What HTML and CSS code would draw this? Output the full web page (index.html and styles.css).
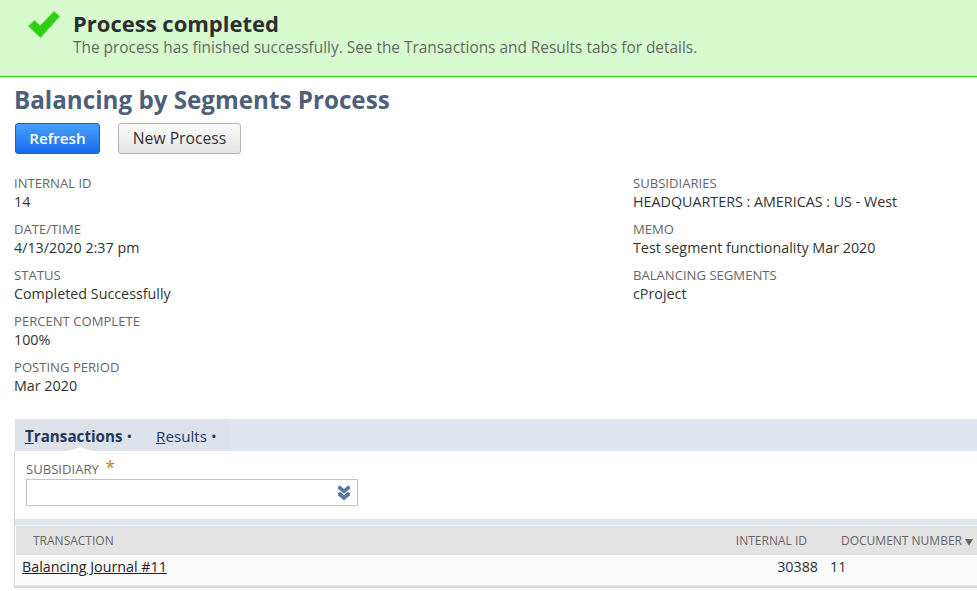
FILE: index.html
```html
<!DOCTYPE html>
<html lang="en">

<head>
    <meta charset="UTF-8">
    <title>Balancing by Segments Process</title>
    <link rel="stylesheet" href="styles.css">
</head>

<body>
    <div class="banner">
        <svg class="check" width="34" height="28" viewBox="0 0 34 28">
            <path d="M1.500 15 L7.5 9.5 L13 15 L27 0.5 L32.500 5.500 L13.500 26.500 Z" fill="#2fd012" stroke="#47d92e" stroke-width="1" />
        </svg>
        <div>
            <div class="banner-title">Process completed</div>
            <div class="banner-text">The process has finished successfully. See the Transactions and Results tabs for details.</div>
        </div>
    </div>

    <div class="main">
        <h1 class="title">Balancing by Segments Process</h1>

        <div class="buttons">
            <button class="btn primary">Refresh</button>
            <button class="btn">New Process</button>
        </div>

        <div class="fields">
            <div class="col">
                <div class="field"><div class="label">INTERNAL ID</div><div class="value">14</div></div>
                <div class="field"><div class="label">DATE/TIME</div><div class="value">4/13/2020 2:37 pm</div></div>
                <div class="field"><div class="label">STATUS</div><div class="value">Completed Successfully</div></div>
                <div class="field"><div class="label">PERCENT COMPLETE</div><div class="value">100%</div></div>
                <div class="field"><div class="label">POSTING PERIOD</div><div class="value">Mar 2020</div></div>
            </div>
            <div class="col">
                <div class="field"><div class="label">SUBSIDIARIES</div><div class="value">HEADQUARTERS : AMERICAS : US - West</div></div>
                <div class="field"><div class="label">MEMO</div><div class="value">Test segment functionality Mar 2020</div></div>
                <div class="field"><div class="label">BALANCING SEGMENTS</div><div class="value">cProject</div></div>
            </div>
        </div>

        <div class="tabs">
            <div class="tab-group">
                <div class="tab active"><u>T</u>ransactions<span class="dot">•</span></div>
                <div class="tab"><u>R</u>esults<span class="dot">•</span></div>
            </div>
        </div>

        <div class="panel">
            <div class="filter">
                <div class="label">SUBSIDIARY <span class="req">*</span></div>
                <div class="select">
                    <svg width="14" height="16" viewBox="0 0 14 14" preserveAspectRatio="none">
                        <path d="M1 1.500 L3 0.500 L7 3.500 L11 0.500 L13 1.500 L13 3.500 L7 7.500 L1 3.500 Z" fill="#5a7aa3" />
                        <path d="M1 7 L3 6 L7 9 L11 6 L13 7 L13 9 L7 13.500 L1 9 Z" fill="#5a7aa3" />
                    </svg>
                </div>
            </div>
            <div class="band"></div>
            <div class="thead">
                <div class="th c-name">TRANSACTION</div>
                <div class="th c-id">INTERNAL ID</div>
                <div class="th c-doc">DOCUMENT NUMBER<span class="sort"></span></div>
            </div>
            <div class="row">
                <div class="c-name"><a href="#">Balancing Journal #11</a></div>
                <div class="c-id">30388</div>
                <div class="c-doc">11</div>
            </div>
        </div>
    </div>
</body>

</html>
```

FILE: styles.css
```css
html,
body {
    margin: 0;
    padding: 0;
    height: 591px;
    overflow: hidden;
    background: #fff;
    font-family: "Open Sans", sans-serif;
    color: #333;
}

.banner {
    box-sizing: border-box;
    height: 77px;
    background: #d7fbcf;
    border-bottom: 1px solid #2fd012;
    display: flex;
    padding: 11px 0 0 27px;
    gap: 12px;
}

.check {
    flex-shrink: 0;
}

.banner-title {
    font-size: 22px;
    font-weight: 700;
    line-height: 25px;
    color: #2e2e2e;
}

.banner-text {
    font-size: 15.4px;
    line-height: 23px;
    color: #666;
}

.main {
    padding: 0 0 0 14px;
}

.title {
    margin: 7px 0 0;
    font-size: 24.2px;
    line-height: 32px;
    font-weight: 700;
    color: #4d5f79;
}

.buttons {
    display: flex;
    gap: 18px;
    margin: 7px 0 0 1px;
}

.btn {
    box-sizing: border-box;
    height: 31px;
    width: 123px;
    padding: 0 0 2px;
    font-family: inherit;
    font-size: 15.7px;
    font-weight: 500;
    color: #333;
    background: linear-gradient(#fafafa, #e5e5e5);
    border: 1px solid #b5b5b5;
    border-radius: 3px;
}

.btn.primary {
    width: 85px;
    font-size: 15.2px;
    font-weight: 600;
    color: #fff;
    background: linear-gradient(#46a0ff, #1a6cea);
    border-color: #1a5fc0;
}

.fields {
    display: flex;
    margin-top: 20px;
}

.col {
    width: 619px;
    flex-shrink: 0;
}

.col + .col {
    width: auto;
    flex: 1;
    min-width: 0;
}

.field {
    height: 46px;
}

.label {
    font-size: 13.1px;
    line-height: 18px;
    color: #666;
}

.value {
    font-size: 14.3px;
    line-height: 20px;
    color: #333;
}

.tabs {
    margin: 15px 0 0 1px;
    height: 32px;
    background: #dfe5ef;
}

.tab-group {
    display: flex;
    width: 215px;
    height: 32px;
    background: #dce1ea;
}

.tab {
    font-size: 15.2px;
    line-height: 35px;
    padding-left: 10px;
    width: 131px;
    box-sizing: border-box;
    color: #24385b;
    position: relative;
}

.tab + .tab {
    width: auto;
}

.tab.active {
    font-weight: 700;
}

.tab.active::after {
    content: "";
    position: absolute;
    left: 52px;
    bottom: 0;
    border-left: 13px solid transparent;
    border-right: 13px solid transparent;
    border-bottom: 4px solid #fff;
}

.dot {
    margin-left: 4px;
    font-weight: 400;
}

.panel {
    border-left: 1px solid #d5d5d5;
    border-bottom: 2px solid #d5d5d5;
}

.filter {
    padding: 9px 0 13px 11px;
}

.filter .label {
    line-height: 19px;
}

.req {
    color: #c8860f;
    font-size: 18px;
    line-height: 10px;
    margin-left: 3px;
}

.select {
    box-sizing: border-box;
    width: 332px;
    height: 27px;
    border: 1px solid #c4c4c4;
    display: flex;
    align-items: center;
    justify-content: flex-end;
    padding-right: 6px;
}

.band {
    height: 6px;
    background: #dfe5ef;
    border-bottom: 1px solid #eef1f6;
}

.thead,
.row {
    display: flex;
    margin-left: 1px;
}

.thead {
    height: 29px;
    background: #e3e3e3;
    align-items: center;
}

.th {
    font-size: 12px;
    color: #666;
}

.thead .c-name {
    padding-left: 17px;
}

.c-name {
    width: 689px;
    flex-shrink: 0;
    box-sizing: border-box;
}

.c-id {
    width: 102px;
    text-align: right;
    flex-shrink: 0;
}

.row .c-id {
    width: 113px;
}

.c-doc {
    padding-left: 12px;
    white-space: nowrap;
}

.thead .c-doc {
    padding-left: 34px;
}

.sort {
    display: inline-block;
    margin-left: 3px;
    border-left: 4px solid transparent;
    border-right: 4px solid transparent;
    border-top: 7px solid #666;
    vertical-align: -1px;
}

.row {
    height: 31px;
    box-sizing: border-box;
    background: #fafafa;
    font-size: 14.3px;
    line-height: 24px;
    border-bottom: 1px solid #e8e8e8;
}

.row .c-name {
    padding-left: 6px;
}

.row a {
    color: #222;
}
```
